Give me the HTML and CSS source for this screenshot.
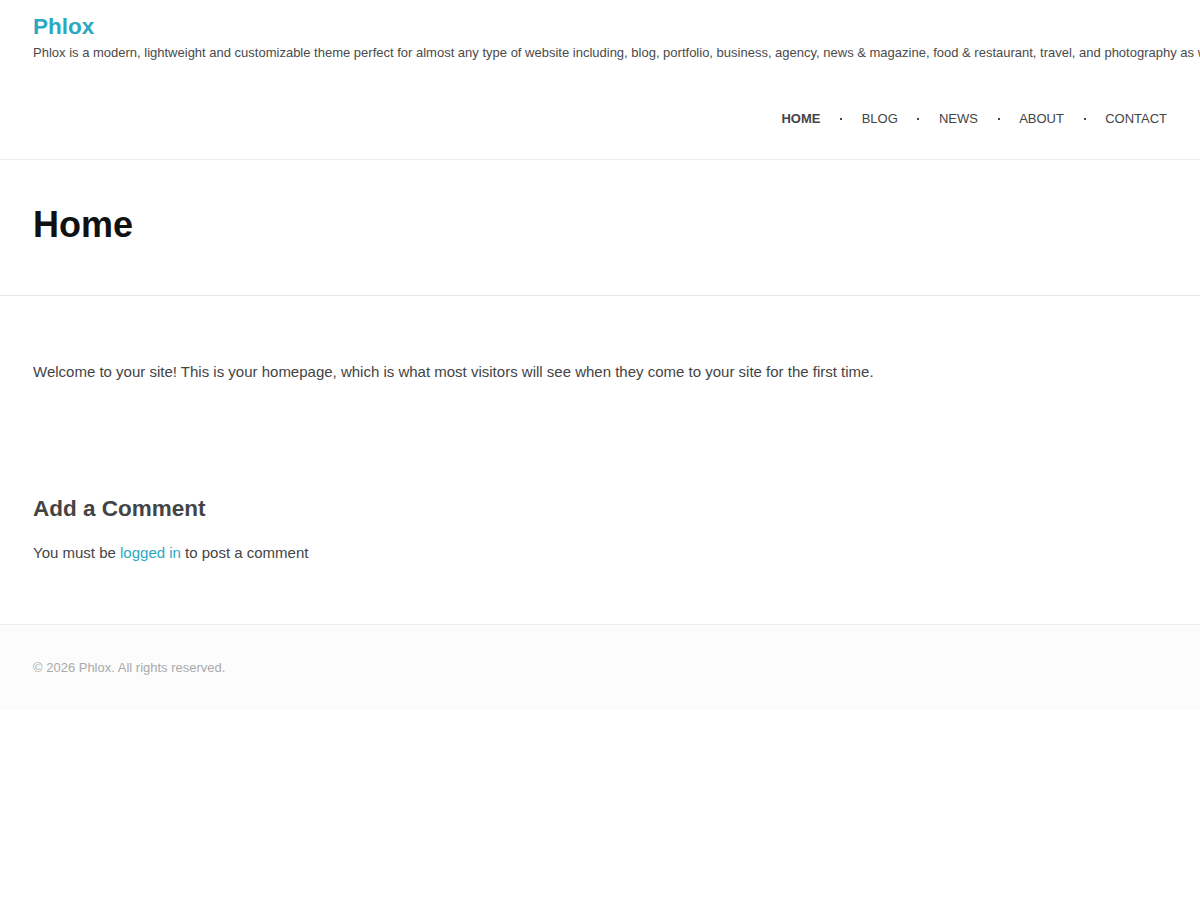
FILE: index.html
```html
<!DOCTYPE html>
<html lang="en">
<head>
  <meta charset="UTF-8">
  <title>Home - Phlox</title>
  <link rel="stylesheet" href="styles.css">
</head>
<body>

  <header class="site-header">
    <div class="branding">
      <a class="site-title" href="#">Phlox</a>
      <p class="site-description">Phlox is a modern, lightweight and customizable theme perfect for almost any type of website including, blog, portfolio, business, agency, news &amp; magazine, food &amp; restaurant, travel, and photography as well.</p>
    </div>
    <nav class="main-nav">
      <a href="#" class="current">Home</a>
      <span class="dot"></span>
      <a href="#">Blog</a>
      <span class="dot"></span>
      <a href="#">News</a>
      <span class="dot"></span>
      <a href="#">About</a>
      <span class="dot"></span>
      <a href="#">Contact</a>
    </nav>
  </header>

  <div class="page-title">
    <h1>Home</h1>
  </div>

  <main class="content">
    <p class="intro">Welcome to your site! This is your homepage, which is what most visitors will see when they come to your site for the first time.</p>

    <section class="comments">
      <h3>Add a Comment</h3>
      <p>You must be <a href="#">logged in</a> to post a comment</p>
    </section>
  </main>

  <footer class="site-footer">
    <p>&copy; 2026 Phlox. All rights reserved.</p>
  </footer>

</body>
</html>
```

FILE: styles.css
```css
* {
  box-sizing: border-box;
  font-family: 'Liberation Sans', Arial, sans-serif;
}

body {
  margin: 0;
  padding: 0;
  background-color: #fff;
  color: #444;
  overflow-x: hidden;
}

a {
  text-decoration: none;
}

.site-header {
  border-bottom: 1px solid #eee;
}

.branding {
  padding: 12px 33px 0;
}

.site-title {
  display: block;
  font-size: 22.5px;
  line-height: 30px;
  font-weight: bold;
  color: #2ba9c1;
}

.site-description {
  margin: 1px 0 0;
  font-size: 13px;
  line-height: 20px;
  color: #4a4a4a;
  white-space: nowrap;
}

.main-nav {
  display: flex;
  align-items: center;
  justify-content: flex-end;
  gap: 19.6px;
  height: 96px;
  padding: 15px 33px 0 0;
}

.main-nav a {
  font-size: 13px;
  text-transform: uppercase;
  color: #444;
}

.main-nav a.current {
  font-weight: bold;
}

.main-nav .dot {
  width: 2px;
  height: 2px;
  margin-top: 1px;
  background-color: #444;
}

.page-title {
  padding: 0 33px;
  height: 136px;
  display: flex;
  align-items: center;
  border-bottom: 1px solid #e8e8e8;
}

.page-title h1 {
  margin: 0 0 6px;
  font-size: 36px;
  color: #111;
}

.content {
  padding: 60px 33px 59px;
}

.intro {
  margin: 0;
  font-size: 15px;
  line-height: 32px;
}

.comments {
  margin-top: 107px;
}

.comments h3 {
  margin: 0 0 18px;
  font-size: 22.5px;
  line-height: 28px;
  color: #444;
}

.comments p {
  margin: 0;
  font-size: 15px;
  line-height: 24px;
}

.comments a {
  color: #2ba9c1;
}

.site-footer {
  background-color: #fcfcfc;
  border-top: 1px solid #eee;
  padding: 33px 33px 0;
  height: 86px;
}

.site-footer p {
  margin: 0;
  font-size: 13px;
  line-height: 20px;
  color: #aaa;
}
```
